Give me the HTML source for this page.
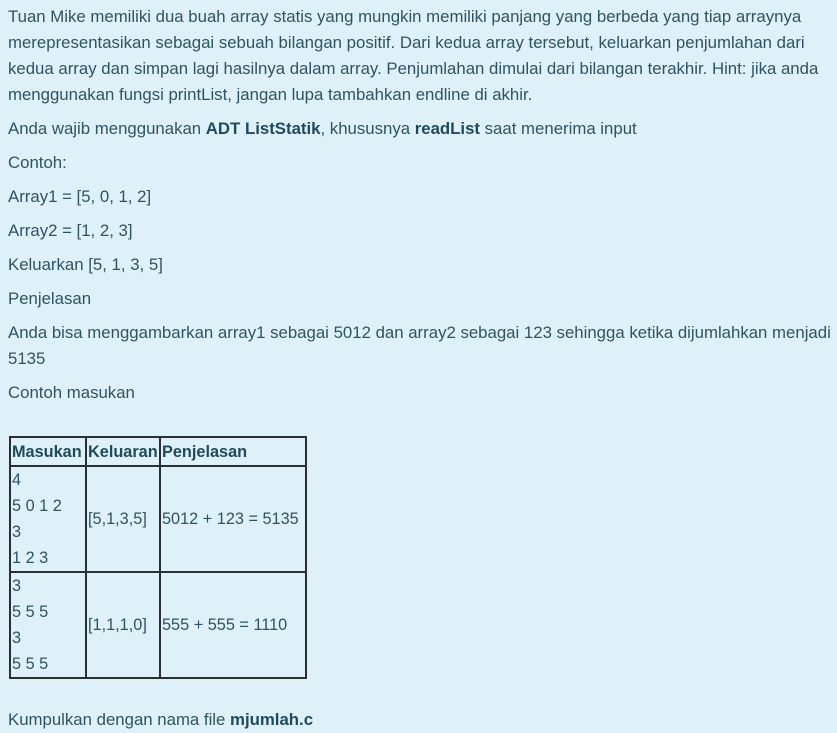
<!DOCTYPE html>
<html><head><meta charset="utf-8"><style>
html,body{margin:0;padding:0;background:#dff1f8;width:837px;height:733px;overflow:hidden}
body{font-family:"Liberation Sans",sans-serif;font-size:16.8px;color:#2f5363;padding:4px 0 0 8px;box-sizing:border-box}
p{margin:0 0 8px 0;line-height:26px;white-space:nowrap}
b{color:#1f4a5a}
table{border-collapse:collapse;margin-top:30px;margin-left:1px;table-layout:fixed;width:296px;font-size:16.3px}
td,th{border:2px solid #2b2f31;padding:0 1px;vertical-align:middle;text-align:left;line-height:26px;white-space:nowrap;overflow:visible}
th{color:#1f4a5a;height:27px}
.last{margin-top:28px}
</style></head><body>
<p>Tuan Mike memiliki dua buah array statis yang mungkin memiliki panjang yang berbeda yang tiap arraynya<br>merepresentasikan sebagai sebuah bilangan positif. Dari kedua array tersebut, keluarkan penjumlahan dari<br>kedua array dan simpan lagi hasilnya dalam array. Penjumlahan dimulai dari bilangan terakhir. Hint: jika anda<br>menggunakan fungsi printList, jangan lupa tambahkan endline di akhir.</p>
<p>Anda wajib menggunakan <b>ADT ListStatik</b>, khususnya <b>readList</b> saat menerima input</p>
<p>Contoh:</p>
<p>Array1 = [5, 0, 1, 2]</p>
<p>Array2 = [1, 2, 3]</p>
<p>Keluarkan [5, 1, 3, 5]</p>
<p>Penjelasan</p>
<p>Anda bisa menggambarkan array1 sebagai 5012 dan array2 sebagai 123 sehingga ketika dijumlahkan menjadi<br>5135</p>
<p>Contoh masukan</p>
<table>
<colgroup><col style="width:76px"><col style="width:74px"><col style="width:146px"></colgroup>
<tr><th>Masukan</th><th>Keluaran</th><th>Penjelasan</th></tr>
<tr><td>4<br>5 0 1 2<br>3<br>1 2 3</td><td>[5,1,3,5]</td><td>5012 + 123 = 5135</td></tr>
<tr><td>3<br>5 5 5<br>3<br>5 5 5</td><td>[1,1,1,0]</td><td>555 + 555 = 1110</td></tr>
</table>
<p class="last">Kumpulkan dengan nama file <b>mjumlah.c</b></p>
</body></html>
